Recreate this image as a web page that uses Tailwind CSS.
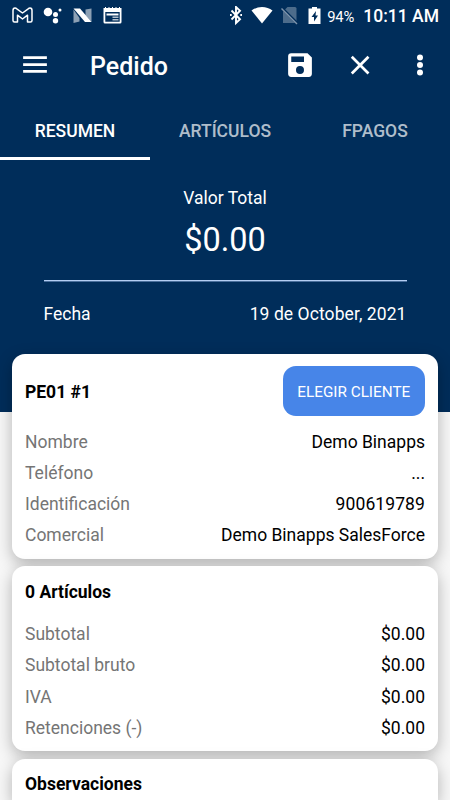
<!doctype html>
<html lang="es">
  <head>
    <meta charset="UTF-8" />
    <meta name="viewport" content="width=device-width, initial-scale=1.0" />
    <title>Pedido</title>
    <script src="https://cdn.jsdelivr.net/npm/@tailwindcss/browser@4"></script>
  </head>

  <body class="h-[800px] overflow-hidden bg-[#f7f7f7] font-[Roboto,sans-serif] text-[17.5px] leading-none text-black">
    <div class="h-[412px] bg-[#002d5a] text-white">
      <!-- Status bar -->
      <div class="flex h-[30px] items-center justify-between pt-[2px] pr-[11px] pl-3">
        <div class="flex items-center gap-[9px]">
          <svg class="h-[18px] w-[21px]" viewBox="0 0 21 18" fill="none" stroke="#fff" stroke-width="1.5" stroke-linejoin="round">
            <path d="M1 3.500Q1 1 3 1q1 0 1.800.8L10.500 6l5.700-4.200Q17 1 18 1q2 0 2 2.500V13.500q0 1.500-1.500 1.500H15.500V8.200L10.500 12 5.500 8.200V15H2.500Q1 15 1 13.500z" />
          </svg>
          <svg class="h-[18px] w-[21px]" viewBox="0 0 21 18" fill="#fff">
            <circle cx="6" cy="5" r="4.300" />
            <circle cx="13.500" cy="7.500" r="2.500" />
            <circle cx="18" cy="3" r="1.500" />
            <circle cx="13.500" cy="13.700" r="2.700" />
          </svg>
          <svg class="h-[18px] w-[21px]" viewBox="0 0 21 18" fill="#fff">
            <path d="M1.500 2.500l6 8.500v3.500l-6 1.500zM19.500 1.500V15l-6-6.500V2.500z" opacity=".55" />
            <path d="M1.500 1.500h6.500l11.500 13.500h-6.500z" />
          </svg>
          <svg class="h-[18px] w-[21px]" viewBox="0 0 21 18" fill="#fff">
            <path d="M1.500 1h1.500V0h1v1h2.500V0h1v1h2.500V0h1v1h2.500V0h1v1h2.500V0h1v1h1.500v14q0 1.500-1.500 1.500h-15Q1.500 16.500 1.500 15zM3.300 5v9.800h14.400V5z" fill-rule="evenodd" />
            <path d="M4.500 6.500h12v2h-12z" />
            <path d="M10.500 9.500h6v1.500h-6zM10.500 12h6v1.500h-6z" opacity=".7" />
          </svg>
        </div>
        <div class="flex items-center">
          <svg class="h-[20px] w-[14px]" viewBox="0 0 14 20" fill="none" stroke="#fff" stroke-width="1.900">
            <path d="M2.500 4.500l8.500 8.800-4 3.700V1l4 3.700-8.500 8.800" />
            <path d="M1 9h1.700M11.300 9h1.700" />
          </svg>
          <svg class="ml-[8px] h-[18px] w-[22px]" viewBox="0 0 22 18" fill="#fff">
            <path d="M.5 3.500Q5 0 11 0t10.500 3.500L11 16.500z" />
          </svg>
          <svg class="ml-[8px] h-[18px] w-[18px]" viewBox="0 0 18 18">
            <path d="M6.500 0h7.500q1.500 0 1.500 1.500V16H2V4.500z" fill="#fff" opacity=".3" />
            <path d="M.5 .5l15.500 15.500" stroke="#002d5a" stroke-width="2.500" />
            <path d="M.5 1.500L16 17" stroke="#7e94ab" stroke-width="1.400" />
          </svg>
          <svg class="ml-[9px] h-[18px] w-[13px]" viewBox="0 0 13 18">
            <path d="M4 0h5v1.500h3.500v15.500H.5V1.500H4z" fill="#fff" />
            <path d="M8 4L3.500 10h2.500v4.500L10 8.500H7.500z" fill="#002d5a" />
          </svg>
          <span class="ml-[6px] pt-[2px] text-[14.800px] tracking-[-0.100px]">94%</span>
          <span class="ml-[9px] pt-[2px] text-[17.500px] font-medium">10:11 AM</span>
        </div>
      </div>

      <!-- App bar -->
      <div class="flex h-[70px] items-center justify-between pr-[15px] pl-[20px]">
        <div class="flex items-center gap-[40px]">
          <svg class="size-[30px]" viewBox="0 0 24 24" fill="#fff">
            <path d="M2.500 18.200h19v-2.200h-19zm0-5.500h19v-2.200h-19zm0-7.700v2.200h19V5z" />
          </svg>
          <h1 class="pt-[3px] text-[25px] font-medium">Pedido</h1>
        </div>
        <div class="flex items-center gap-[30px]">
          <svg class="size-[30px]" viewBox="0 0 24 24" fill="#fff">
            <path d="M18 2.500H5a2.500 2.500 0 0 0-2.500 2.500v14A2.500 2.500 0 0 0 5 21.500h14a2.500 2.500 0 0 0 2.500-2.500V6zM12 19.200a3.200 3.200 0 1 1 0-6.400 3.200 3.200 0 0 1 0 6.400zm3.200-9.700H5V5.200h10.200z" />
          </svg>
          <svg class="size-[30px]" viewBox="0 0 24 24" fill="none" stroke="#fff" stroke-width="2.200">
            <path d="M6.200 6.200l11.800 11.800M18 6.200L6.200 18" stroke-linecap="square" />
          </svg>
          <svg class="size-[30px]" viewBox="0 0 24 24" fill="#fff">
            <circle cx="12" cy="6" r="2.400" />
            <circle cx="12" cy="12" r="2.400" />
            <circle cx="12" cy="18" r="2.400" />
          </svg>
        </div>
      </div>

      <!-- Tabs -->
      <div class="grid h-[60px] grid-cols-3 text-center font-medium text-white/70">
        <div class="flex items-center justify-center border-b-[3px] border-white pt-[6px] text-white">RESUMEN</div>
        <div class="flex items-center justify-center border-b-[3px] border-transparent pt-[6px]">ARTÍCULOS</div>
        <div class="flex items-center justify-center border-b-[3px] border-transparent pt-[6px]">FPAGOS</div>
      </div>

      <!-- Total -->
      <div class="px-[43.500px] pt-[28px]">
        <div class="text-center leading-[20px]">Valor Total</div>
        <div class="mt-[12px] text-center text-[32.500px] leading-[40px]">$0.00</div>
        <div class="mt-[20px] h-[2px] bg-linear-to-b from-[#b4cdf2] from-50% to-[#4a6f9c] to-50%"></div>
        <div class="mt-[22px] flex justify-between leading-[20px]">
          <span>Fecha</span>
          <span class="tracking-[0.080px]">19 de October, 2021</span>
        </div>
      </div>
    </div>

    <div class="relative -mt-[58.500px] flex flex-col gap-[7.500px] px-[12px]">
      <div class="h-[205px] rounded-[13px] bg-white px-[13px] py-[12.500px] shadow-[0_5px_16px_rgba(0,0,0,0.28)]">
        <div class="flex h-[50px] items-center justify-between">
          <h2 class="pt-[3px] font-bold">PE01 #1</h2>
          <button class="h-[50px] w-[142.500px] rounded-[13px] bg-[#4785e8] pt-[3px] text-[15.300px] text-white">ELEGIR CLIENTE</button>
        </div>
        <dl class="mt-[10.700px] grid auto-rows-[31.250px] grid-cols-[auto_1fr] items-center">
          <dt class="text-[#757575]">Nombre</dt>
          <dd class="text-right">Demo Binapps</dd>
          <dt class="text-[#757575]">Teléfono</dt>
          <dd class="text-right">...</dd>
          <dt class="text-[#757575]">Identificación</dt>
          <dd class="text-right tracking-[0.100px]">900619789</dd>
          <dt class="text-[#757575]">Comercial</dt>
          <dd class="text-right">Demo Binapps SalesForce</dd>
        </dl>
      </div>

      <div class="h-[185px] rounded-[13px] bg-white px-[13px] py-[12.500px] shadow-[0_5px_16px_rgba(0,0,0,0.28)]">
        <h2 class="leading-[26px] font-bold">0 Artículos</h2>
        <dl class="mt-[14.700px] grid auto-rows-[31.250px] grid-cols-[auto_1fr] items-center">
          <dt class="text-[#757575]">Subtotal</dt>
          <dd class="text-right">$0.00</dd>
          <dt class="text-[#757575]">Subtotal bruto</dt>
          <dd class="text-right">$0.00</dd>
          <dt class="text-[#757575]">IVA</dt>
          <dd class="text-right">$0.00</dd>
          <dt class="text-[#757575]">Retenciones (-)</dt>
          <dd class="text-right">$0.00</dd>
        </dl>
      </div>

      <div class="h-[41px] rounded-t-[13px] bg-white px-[13px] pt-[12.500px] shadow-[0_5px_16px_rgba(0,0,0,0.28)]">
        <h2 class="leading-[26px] font-bold">Observaciones</h2>
      </div>
    </div>
  </body>
</html>
